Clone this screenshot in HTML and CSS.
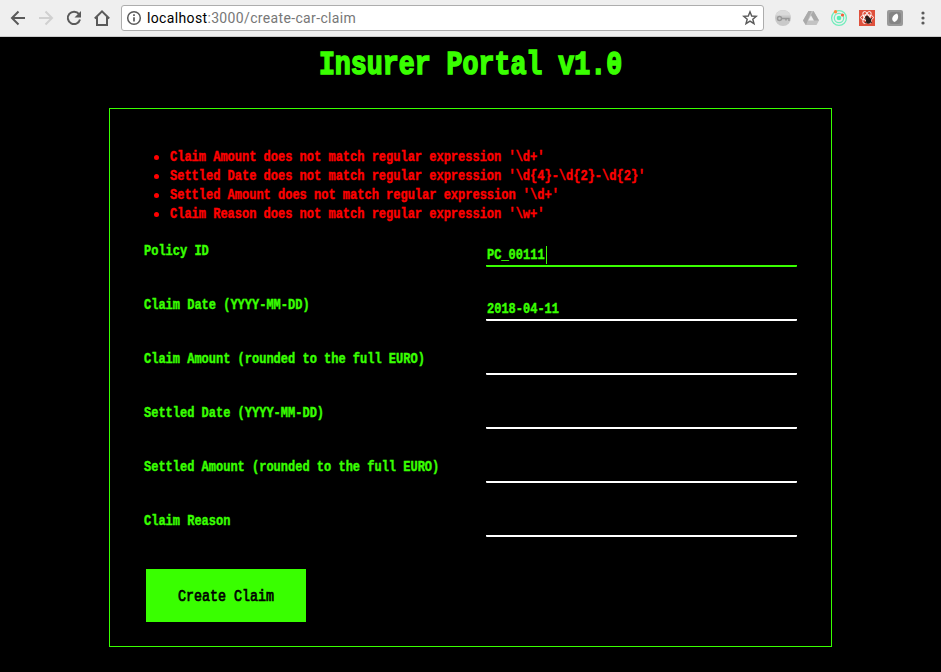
FILE: index.html
```html
<!DOCTYPE html>
<html lang="en">
<head>
<meta charset="utf-8">
<title>Insurer Portal</title>
<link rel="stylesheet" href="styles.css">
</head>
<body>
<header class="toolbar">
  <svg class="nav" width="121" height="36" viewBox="0 0 121 36" fill="none" stroke="#5a5a5a" stroke-width="2">
    <path d="M25 18H12M18.5 11.5L12 18l6.500 6.500"/>
    <path stroke="#d0d0d0" d="M39 18H52M45.500 11.500L52 18l-6.500 6.500"/>
    <path d="M79 14.200A6.200 6.200 0 1 0 80 19.500"/>
    <path fill="#5a5a5a" stroke="none" d="M81 11v6.500h-6.500z"/>
    <path d="M94.800 18.500L102 11.300l7.200 7.200M97 17v8h10v-8"/>
  </svg>
  <div class="address">
    <svg width="16" height="16" viewBox="0 0 16 16" fill="none" stroke="#5a5a5a" stroke-width="1.500"><circle cx="8" cy="8" r="6.300"/><path stroke-width="1.700" d="M8 7.200v4.300M8 4.300v1.700"/></svg>
    <span class="url"><b>localhost</b>:3000/create-car-claim</span>
    <svg class="star" width="16" height="16" viewBox="0 0 16 16" fill="none" stroke="#5a5a5a" stroke-width="1.400"><path d="M8 1.800l1.700 4.200 4.600.3-3.500 2.900 1.200 4.500L8 11.200l-4 2.500 1.200-4.500L1.700 6.300 6.300 6z"/></svg>
  </div>
  <svg width="177" height="36" viewBox="764 0 177 36">
    <circle cx="783" cy="18" r="8" fill="#c9c9c9"/><path d="M775.500 15.500a8 8 0 0 1 15 0z" fill="#dadada"/>
    <g fill="none" stroke="#999" stroke-width="1.500"><circle cx="779.500" cy="18.500" r="2"/><path d="M781.500 18.500h7.500v2.500M786 18.500v2"/></g>
    <path fill="#c3c3c3" d="M808.500 11h5l5.500 9.500-2.500 4.500h-11l-2.500-4.500z"/><path fill="#aaa" d="M808.500 11h3l-5.500 14-3-4.500zM813.500 11l5.500 9.500h-5L811 15z"/><path fill="#efefef" d="M811 15.500l2.800 5h-5.600z"/>
    <g fill="none" stroke="#72edbc" stroke-width="1.300"><circle cx="839" cy="18" r="7.400"/><circle cx="839" cy="18" r="4.700"/></g><circle cx="839" cy="18" r="2.300" fill="#55efb1"/><circle cx="835.500" cy="11.700" r="1.700" fill="#ff8b3d"/><circle cx="842.500" cy="15" r="1.600" fill="#f45b38"/>
    <path fill="#df513d" d="M859 10h16v16h-16z"/>
    <g fill="none" stroke="#fff" stroke-width=".9"><ellipse cx="867" cy="17.500" rx="6.500" ry="2.600"/><ellipse cx="867" cy="17.500" rx="6.500" ry="2.600" transform="rotate(60 867 17.500)"/><ellipse cx="867" cy="17.500" rx="6.500" ry="2.600" transform="rotate(-60 867 17.500)"/></g>
    <ellipse cx="868.500" cy="20.500" rx="2.500" ry="3.200" fill="#241b19"/><circle cx="867" cy="17.300" r="1.700" fill="#241b19"/><path d="M864.500 18.500l7.500 4M865 23l7-4.500" stroke="#241b19"/>
    <rect x="887" y="10" width="16" height="16" rx="2" fill="#999"/><rect x="889" y="12" width="12" height="12" rx="3" fill="#858585"/><path fill="#fff" d="M897 13.500c2 2 1.500 7-2.500 8.500-4-1.500-2.500-7 2.500-8.500z"/>
    <g fill="#5a5a5a"><circle cx="923" cy="13" r="1.600"/><circle cx="923" cy="18" r="1.600"/><circle cx="923" cy="23" r="1.600"/></g>
  </svg>
</header>
<main>
  <h1><span class="tall">Insurer Portal v1.0</span></h1>
  <form class="card">
    <ul>
      <li><span class="tall">Claim Amount does not match regular expression '\d+'</span></li>
      <li><span class="tall">Settled Date does not match regular expression '\d{4}-\d{2}-\d{2}'</span></li>
      <li><span class="tall">Settled Amount does not match regular expression '\d+'</span></li>
      <li><span class="tall">Claim Reason does not match regular expression '\w+'</span></li>
    </ul>
    <div class="row"><label class="tall">Policy ID</label><div class="field active"><span class="tall">PC_00111</span><i class="caret"></i></div></div>
    <div class="row"><label class="tall">Claim Date (YYYY-MM-DD)</label><div class="field"><span class="tall">2018-04-11</span></div></div>
    <div class="row"><label class="tall">Claim Amount (rounded to the full EURO)</label><div class="field"></div></div>
    <div class="row"><label class="tall">Settled Date (YYYY-MM-DD)</label><div class="field"></div></div>
    <div class="row"><label class="tall">Settled Amount (rounded to the full EURO)</label><div class="field"></div></div>
    <div class="row"><label class="tall">Claim Reason</label><div class="field"></div></div>
    <button type="button"><span class="tall">Create Claim</span></button>
  </form>
</main>
</body>
</html>
```
FILE: styles.css
```css
* { box-sizing: border-box; }
body { margin: 0; height: 672px; overflow: hidden; background: #000; color: #39ff00; font: bold 12px/19px "Liberation Mono", monospace; }
.toolbar { display: flex; height: 37px; background: #efefef; border-bottom: 1px solid #cbcbcb; }
.toolbar svg { display: block; flex: none; }
.address { display: flex; align-items: center; width: 643px; height: 26px; margin-top: 5px; padding: 0 5px 0 4px; background: #fff; border: 1px solid #adadad; border-radius: 3px; }
.url { margin-left: 5px; color: #777; font: 14px/24px Roboto, sans-serif; letter-spacing: .35px; white-space: nowrap; }
.url b { color: #000; font-weight: 400; }
.star { margin-left: auto; }
.tall { display: inline-block; transform: scaleY(1.22); white-space: pre; -webkit-text-stroke: .35px; }
h1 { height: 71px; margin: 0; padding-top: 8px; text-align: center; font-size: 26.6px; line-height: 40px; }
h1 .tall { transform: scaleY(1.24); -webkit-text-stroke: 1.3px; }
.card { width: 723px; height: 539px; margin-left: 109px; padding: 39px 34px 0; border: 1px solid #39ff00; }
ul { height: 94px; margin: 0; padding: 0; list-style: none; color: red; }
li { display: flex; align-items: center; height: 19px; }
li::before { content: ""; width: 5px; height: 5px; margin: 0 11px 0 10px; border-radius: 50%; background: red; }
.row { display: flex; justify-content: space-between; align-items: flex-start; height: 54px; }
.row label { height: 19px; }
.field { display: flex; align-items: center; width: 311px; height: 25px; padding: 3px 1px 0; border: 0 solid #fff; border-bottom-width: 2px; border-radius: 1px; }
.active { border-color: #39ff00; }
.caret { width: 1px; height: 18px; margin-left: 1px; background: #39ff00; }
button { display: block; width: 160px; height: 53px; margin: 3px 0 0 2px; padding: 2px 0 0; border: 0; background: #39ff00; color: #000; font: 13.33px/20px "Liberation Mono", monospace; }
button .tall { -webkit-text-stroke: .6px; }
```
